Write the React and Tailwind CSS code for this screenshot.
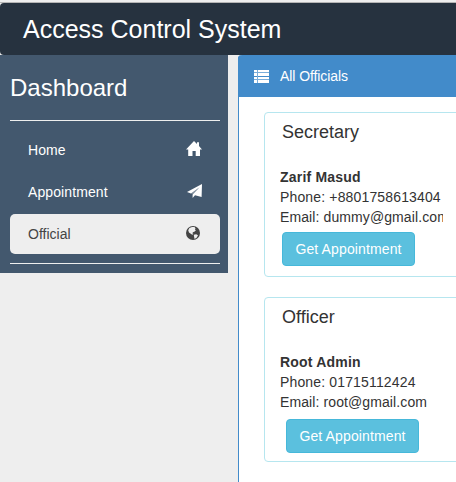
import React from "react";

function HomeIcon() {
  return (
    <svg width="16" height="15" viewBox="0 0 16 15" fill="currentColor" className="-mt-[3px]">
      <path d="M8 0 L11 3 V1.2 H13 V5 L16 8.4 H14 V15 H9.7 V10 H6.5 V15 H2.2 V8.4 H0 Z" />
    </svg>
  );
}

function SendIcon() {
  return (
    <svg width="15" height="14" viewBox="0 0 15 14" fill="currentColor" className="-mt-[2px]">
      <path d="M15 0 L0 8 L4 9.6 L12.6 3.2 L5.6 10.4 V14 L8 11.2 L14.6 13 Z" />
      <path d="M12.6 3.2 L6 10 L4 9.6 Z" opacity=".35" />
    </svg>
  );
}

function GlobeIcon() {
  return (
    <svg width="14" height="14" viewBox="0 0 14 14" className="-mt-[2px]">
      <circle cx="7" cy="7" r="7" fill="#444" />
      <path
        d="M3.4 2 L6 1 L8.5 1.1 L9.5 2.4 L8.9 3.5 L9.9 4.3 L8.7 5.5 L7 6.2 L6.3 7.2 L7.5 8.1 L6.2 8.8 L4.8 7.7 L3 6.6 L2.2 4.3 Z M7.8 8.8 L10.2 8.2 L12 9.2 L10.8 11.4 L8.6 12.9 L8.1 10.8 Z"
        fill="#eee"
      />
    </svg>
  );
}

function ListIcon() {
  return (
    <svg width="15" height="13" viewBox="0 0 15 13" fill="currentColor" shapeRendering="crispEdges">
      <path d="M0 0h3v2H0z M4 0h11v2H4z M0 3h3v3H0z M4 3h11v3H4z M0 7h3v2H0z M4 7h11v2H4z M0 10h3v3H0z M4 10h11v3H4z" />
      <path d="M0 2h15v1H0z M0 9h15v1H0z M3 0h1v13H3z" opacity=".3" />
    </svg>
  );
}

function NavItem({ label, icon, active }) {
  return (
    <li
      className={
        active
          ? "flex h-10 items-center justify-between rounded-[5px] bg-[#eee] pr-[20px] pl-[18px] text-[#444]"
          : "flex h-10 items-center justify-between rounded-[5px] pr-[18px] pl-[18px] tracking-[0.1px] text-white"
      }
    >
      <span>{label}</span>
      {icon}
    </li>
  );
}

function OfficialCard({ title, name, phone, email, buttonClass }) {
  return (
    <section className="h-[165px] w-[240px] rounded-[4px] border border-[#b6e6ef] pl-[15px]">
      <h3 className="mt-[9px] ml-[2px] text-[18px] leading-5">{title}</h3>
      <div className="mt-[25px] w-[163px] overflow-hidden whitespace-nowrap">
        <div className="font-bold tracking-[0.2px]">{name}</div>
        <div className="tracking-[0.15px]">Phone: {phone}</div>
        <div className="tracking-[0.1px]">Email: {email}</div>
      </div>
      <button className={buttonClass}>Get Appointment</button>
    </section>
  );
}

export default function App() {
  return (
    <div className="flex h-[482px] w-[456px] flex-col overflow-hidden bg-[#eee] font-['Liberation_Sans',Arial,sans-serif] text-[14px] leading-5 text-[#333]">
      <div className="h-[3px] shrink-0 border-b border-[#b5b5b5]" />
      <header className="flex h-[52px] shrink-0 items-center rounded-l-[4px] bg-[#26323f] pl-[23px] text-[25px] text-white">
        Access Control System
      </header>
      <div className="flex min-h-0 flex-1">
        <aside className="h-[218px] w-[228px] shrink-0 bg-[#43586e] pr-[8px] pl-[10px]">
          <h2 className="pt-[20px] text-[24px] leading-[26px] text-white">Dashboard</h2>
          <ul className="mt-[19px] flex h-[144px] flex-col gap-[2px] border-y border-[#eee] pt-[9px]">
            <NavItem label="Home" icon={<HomeIcon />} />
            <NavItem label="Appointment" icon={<SendIcon />} />
            <NavItem label="Official" icon={<GlobeIcon />} active />
          </ul>
        </aside>
        <main className="ml-[10px] w-[240px] shrink-0 rounded-tl-[4px] border-l border-[#428bca] bg-white">
          <div className="-ml-px flex h-[42px] items-center gap-[11px] rounded-tl-[4px] bg-[#428bca] pl-[16px] tracking-[-0.08px] text-white">
            <ListIcon />
            <span>All Officials</span>
          </div>
          <div className="flex flex-col gap-[20px] pt-[15px] pl-[25px]">
            <OfficialCard
              title="Secretary"
              name="Zarif Masud"
              phone="+8801758613404"
              email="dummy@gmail.com"
              buttonClass="mt-[5px] ml-[2px] h-[34px] w-[133px] rounded-[4px] border border-[#46b8da] bg-[#5bc0de] tracking-[0.12px] text-white"
            />
            <OfficialCard
              title="Officer"
              name="Root Admin"
              phone="01715112424"
              email="root@gmail.com"
              buttonClass="mt-[7px] ml-[6px] h-[34px] w-[133px] rounded-[4px] border border-[#46b8da] bg-[#5bc0de] tracking-[0.12px] text-white"
            />
          </div>
        </main>
      </div>
    </div>
  );
}
